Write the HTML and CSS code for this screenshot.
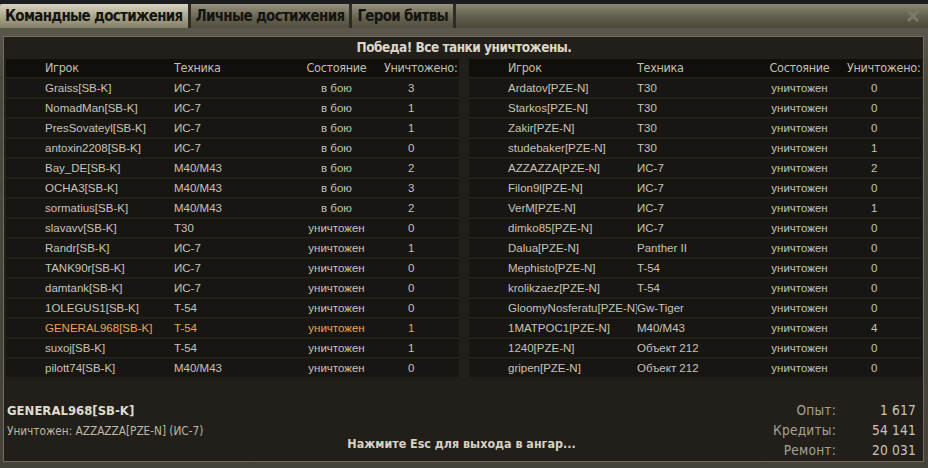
FILE: index.html
```html
<!DOCTYPE html>
<html lang="ru">
  <head>
    <meta charset="UTF-8" />
    <meta name="viewport" content="width=device-width, initial-scale=1.0" />
    <title>Итоги боя</title>
    <link rel="stylesheet" href="styles.css">
  </head>
  <body>
    <div class="window">
      <nav class="tabs">
        <div class="tab active">Командные достижения</div>
        <div class="tab">Личные достижения</div>
        <div class="tab">Герои битвы</div>
        <div class="close">
          <svg width="12" height="12" viewBox="0 0 12 12">
            <path d="M2 2 L10 10 M10 2 L2 10" stroke="#7d7968" stroke-width="3" stroke-linecap="square" />
          </svg>
        </div>
      </nav>

      <section class="frame">
        <div class="panel">
          <h1 class="result">Победа! Все танки уничтожены.</h1>

          <div class="tables">
            <div class="team">
              <div class="row head"><span>Игрок</span><span>Техника</span><span class="st">Состояние</span><span class="n">Уничтожено:</span></div>
              <div class="row"><span>Graiss[SB-K]</span><span>ИС-7</span><span class="st">в бою</span><span class="n">3</span></div>
              <div class="row"><span>NomadMan[SB-K]</span><span>ИС-7</span><span class="st">в бою</span><span class="n">1</span></div>
              <div class="row"><span>PresSovateyl[SB-K]</span><span>ИС-7</span><span class="st">в бою</span><span class="n">1</span></div>
              <div class="row"><span>antoxin2208[SB-K]</span><span>ИС-7</span><span class="st">в бою</span><span class="n">0</span></div>
              <div class="row"><span>Bay_DE[SB-K]</span><span>M40/M43</span><span class="st">в бою</span><span class="n">2</span></div>
              <div class="row"><span>OCHA3[SB-K]</span><span>M40/M43</span><span class="st">в бою</span><span class="n">3</span></div>
              <div class="row"><span>sormatius[SB-K]</span><span>M40/M43</span><span class="st">в бою</span><span class="n">2</span></div>
              <div class="row"><span>slavavv[SB-K]</span><span>T30</span><span class="st">уничтожен</span><span class="n">0</span></div>
              <div class="row"><span>Randr[SB-K]</span><span>ИС-7</span><span class="st">уничтожен</span><span class="n">1</span></div>
              <div class="row"><span>TANK90r[SB-K]</span><span>ИС-7</span><span class="st">уничтожен</span><span class="n">0</span></div>
              <div class="row"><span>damtank[SB-K]</span><span>ИС-7</span><span class="st">уничтожен</span><span class="n">0</span></div>
              <div class="row"><span>1OLEGUS1[SB-K]</span><span>T-54</span><span class="st">уничтожен</span><span class="n">0</span></div>
              <div class="row me"><span>GENERAL968[SB-K]</span><span>T-54</span><span class="st">уничтожен</span><span class="n">1</span></div>
              <div class="row"><span>suxoj[SB-K]</span><span>T-54</span><span class="st">уничтожен</span><span class="n">1</span></div>
              <div class="row"><span>pilott74[SB-K]</span><span>M40/M43</span><span class="st">уничтожен</span><span class="n">0</span></div>
            </div>

            <div class="team">
              <div class="row head"><span>Игрок</span><span>Техника</span><span class="st">Состояние</span><span class="n">Уничтожено:</span></div>
              <div class="row"><span>Ardatov[PZE-N]</span><span>T30</span><span class="st">уничтожен</span><span class="n">0</span></div>
              <div class="row"><span>Starkos[PZE-N]</span><span>T30</span><span class="st">уничтожен</span><span class="n">0</span></div>
              <div class="row"><span>Zakir[PZE-N]</span><span>T30</span><span class="st">уничтожен</span><span class="n">0</span></div>
              <div class="row"><span>studebaker[PZE-N]</span><span>T30</span><span class="st">уничтожен</span><span class="n">1</span></div>
              <div class="row"><span>AZZAZZA[PZE-N]</span><span>ИС-7</span><span class="st">уничтожен</span><span class="n">2</span></div>
              <div class="row"><span>Filon9l[PZE-N]</span><span>ИС-7</span><span class="st">уничтожен</span><span class="n">0</span></div>
              <div class="row"><span>VerM[PZE-N]</span><span>ИС-7</span><span class="st">уничтожен</span><span class="n">1</span></div>
              <div class="row"><span>dimko85[PZE-N]</span><span>ИС-7</span><span class="st">уничтожен</span><span class="n">0</span></div>
              <div class="row"><span>Dalua[PZE-N]</span><span>Panther II</span><span class="st">уничтожен</span><span class="n">0</span></div>
              <div class="row"><span>Mephisto[PZE-N]</span><span>T-54</span><span class="st">уничтожен</span><span class="n">0</span></div>
              <div class="row"><span>krolikzaez[PZE-N]</span><span>T-54</span><span class="st">уничтожен</span><span class="n">0</span></div>
              <div class="row"><span>GloomyNosferatu[PZE-N]</span><span>Gw-Tiger</span><span class="st">уничтожен</span><span class="n">0</span></div>
              <div class="row"><span>1MATPOC1[PZE-N]</span><span>M40/M43</span><span class="st">уничтожен</span><span class="n">4</span></div>
              <div class="row"><span>1240[PZE-N]</span><span>Объект 212</span><span class="st">уничтожен</span><span class="n">0</span></div>
              <div class="row"><span>gripen[PZE-N]</span><span>Объект 212</span><span class="st">уничтожен</span><span class="n">0</span></div>
            </div>
          </div>

          <div class="summary">
            <div class="player">
              <div class="player-name">GENERAL968[SB-K]</div>
              <div class="killer">Уничтожен: AZZAZZA[PZE-N] (ИС-7)</div>
            </div>
            <div class="hint">Нажмите Esc для выхода в ангар...</div>
            <div class="stats">
              <span>Опыт:</span><span>1 617</span>
              <span>Кредиты:</span><span>54 141</span>
              <span>Ремонт:</span><span>20 031</span>
            </div>
          </div>
        </div>
      </section>
    </div>
  </body>
</html>
```

FILE: styles.css
```css
body {
  margin: 0;
  background-color: #1b1c20;
  font-family: "Liberation Sans", Arial, sans-serif;
  overflow: hidden;
}
.window {
  padding-top: 4px;
  height: 464px;
  display: flex;
  flex-direction: column;
}

/* tabs */
.tabs {
  height: 24px;
  display: flex;
  background: linear-gradient(#8b8773, #615d4c 55%, #4b473a);
}
.tab {
  padding: 0 5px;
  font: bold 15px/24px "DejaVu Sans Condensed", sans-serif;
  letter-spacing: -0.7px;
  color: #15140f;
  border-right: 3px solid #2e2c25;
  background: linear-gradient(#96917c, #656150 60%, #524e40);
}
.tab.active {
  border-top-left-radius: 3px;
  background: linear-gradient(#d8d3be, #a8a38b 55%, #857f69);
}
.close {
  margin-left: auto;
  width: 30px;
  display: flex;
  align-items: center;
  justify-content: center;
}

/* frame */
.frame {
  flex: 1;
  display: flex;
  padding: 8px 4px 6px 3px;
  background: linear-gradient(#5a574c, #4c493f 10%, #45423a);
}
.panel {
  flex: 1;
  display: flex;
  flex-direction: column;
  padding: 0 1px 0 2px;
  background-color: #221f1b;
  border: 1px solid #706d5e;
}
.result {
  margin: 0;
  height: 20px;
  font: bold 13.5px/20px "DejaVu Sans Condensed", sans-serif;
  letter-spacing: -0.5px;
  text-align: center;
  color: #dad6c8;
}

/* tables */
.tables {
  display: flex;
  gap: 10px;
  margin-top: 2px;
}
.team {
  width: 453px;
  display: flex;
  flex-direction: column;
  gap: 2px;
}
.row {
  height: 18px;
  display: grid;
  grid-template-columns: 168px 110px 100px 75px;
  align-items: center;
  background-color: #181612;
  font-size: 11.5px;
  line-height: 18px;
  color: #c6c3b8;
}
.row span {
  white-space: nowrap;
  overflow: hidden;
}
.row span:first-child {
  padding-left: 39px;
  padding-right: 5px;
}
.row .st {
  padding-left: 5px;
  text-align: center;
}
.row .n {
  padding-left: 24px;
}
.row.head {
  background-color: #100f0c;
  font: 12.5px/18px "DejaVu Sans Condensed", sans-serif;
  letter-spacing: -0.3px;
  color: #c2beb0;
}
.row.head .n {
  padding: 0 3px 0 0;
  text-align: right;
  overflow: visible;
}
.row.me {
  color: #e3a55c;
}

/* bottom */
.summary {
  flex: 1;
  display: grid;
  grid-template-columns: 1fr auto 1fr;
  padding: 0 6px 1px 1px;
  font-family: "DejaVu Sans Condensed", sans-serif;
}
.player {
  padding-top: 24px;
}
.player-name {
  font: bold 13px/20px "DejaVu Sans Condensed", sans-serif;
  color: #dedbcd;
}
.killer {
  font-size: 11.7px;
  line-height: 20px;
  color: #bcb8a9;
}
.hint {
  align-self: end;
  padding-bottom: 6px;
  font: bold 12.4px/20px "DejaVu Sans Condensed", sans-serif;
  color: #d6d2c4;
}
.stats {
  align-self: end;
  justify-self: end;
  display: grid;
  grid-template-columns: auto 80px;
  font-size: 13.6px;
  line-height: 20px;
  letter-spacing: 0.2px;
  text-align: right;
}
.stats span:nth-child(odd) {
  color: #a6a293;
}
.stats span:nth-child(even) {
  color: #c9c5b6;
}
```
